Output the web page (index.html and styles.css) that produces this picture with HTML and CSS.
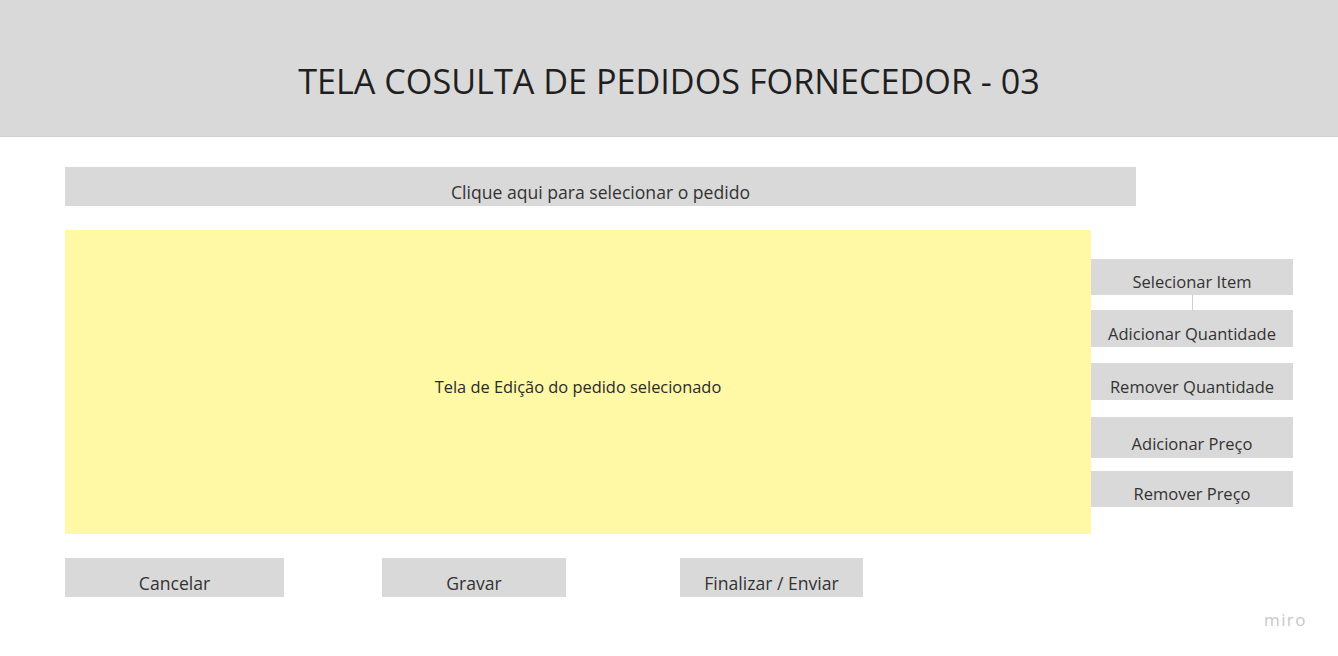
FILE: index.html
```html
<!DOCTYPE html>
<html lang="pt">
<head>
<meta charset="utf-8">
<link rel="stylesheet" href="styles.css">
</head>
<body>
<header class="header">
  <h1 class="title">TELA COSULTA DE PEDIDOS FORNECEDOR - 03</h1>
</header>
<main class="main">
  <div class="select-bar">Clique aqui para selecionar o pedido</div>
  <div class="work-row">
    <div class="editor">Tela de Edição do pedido selecionado</div>
    <div class="side">
      <div class="side-btn b1">Selecionar Item</div>
      <div class="connector"></div>
      <div class="side-btn b2">Adicionar Quantidade</div>
      <div class="side-btn b3">Remover Quantidade</div>
      <div class="side-btn b4">Adicionar Preço</div>
      <div class="side-btn b5">Remover Preço</div>
    </div>
  </div>
  <div class="actions">
    <div class="act cancel">Cancelar</div>
    <div class="act save">Gravar</div>
    <div class="act send">Finalizar / Enviar</div>
  </div>
</main>
<div class="miro">miro</div>
</body>
</html>
```
FILE: styles.css
```css
* { box-sizing: border-box; }
html, body { margin: 0; padding: 0; }
body {
  width: 1338px;
  height: 656px;
  overflow: hidden;
  background: #ffffff;
  font-family: "Open Sans", "Noto Sans", sans-serif;
  color: #333333;
  position: relative;
}
.header {
  height: 137px;
  background: #d9d9d9;
  border-bottom: 1px solid #d0d0d0;
  display: flex;
  align-items: center;
  justify-content: center;
}
.title {
  margin: 0;
  padding-top: 24px;
  font-weight: 400;
  font-size: 34.2px;
  color: #1f1f1f;
  letter-spacing: 0;
}
.main {
  padding: 30px 0 0 65px;
}
.select-bar {
  width: 1071px;
  height: 39px;
  background: #d9d9d9;
  display: flex;
  align-items: center;
  justify-content: center;
  padding-top: 11px;
  font-size: 17.6px;
  color: #333;
}
.work-row {
  margin-top: 24px;
  display: flex;
}
.editor {
  width: 1026px;
  height: 304px;
  background: #fff8a5;
  display: flex;
  align-items: center;
  justify-content: center;
  padding-top: 8px;
  font-size: 16.4px;
  color: #2a2a2a;
}
.side {
  width: 202px;
  padding-top: 29px;
  display: flex;
  flex-direction: column;
}
.side-btn {
  background: #d9d9d9;
  display: flex;
  align-items: center;
  justify-content: center;
  padding-top: 9px;
  font-size: 16.5px;
  color: #333;
}
.connector {
  width: 1px;
  height: 15px;
  background: #cfcfcf;
  align-self: center;
}
.b1 { height: 36px; }
.b2 { height: 37px; }
.b3 { height: 37px; margin-top: 16px; }
.b4 { height: 41px; margin-top: 17px; padding-top: 12px; }
.b5 { height: 36px; margin-top: 13px; }
.actions {
  margin-top: 24px;
  display: flex;
}
.act {
  height: 39px;
  background: #d9d9d9;
  display: flex;
  align-items: center;
  justify-content: center;
  padding-top: 11px;
  font-size: 17.6px;
  color: #333;
}
.cancel { width: 219px; }
.save { width: 184px; margin-left: 98px; }
.send { width: 183px; margin-left: 114px; }
.miro {
  position: absolute;
  left: 1264px;
  top: 608px;
  font-size: 17px;
  letter-spacing: 1.4px;
  color: #c8c8c8;
  font-weight: 500;
}
```
